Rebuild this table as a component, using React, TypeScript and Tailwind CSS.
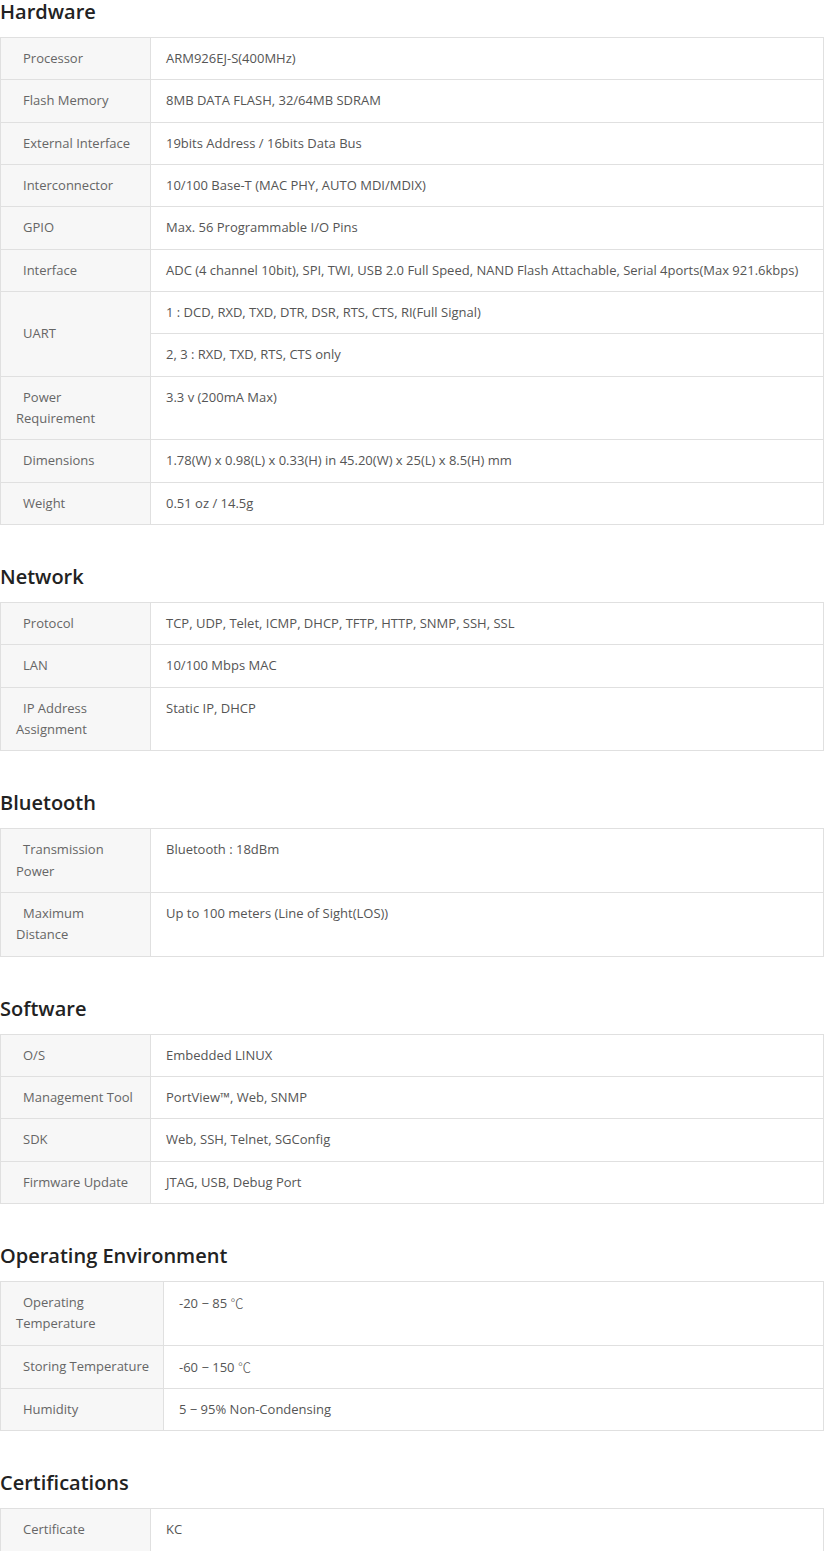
import React from "react";

type Row = { label: string; values: string[]; nowrap?: boolean };
type Section = { title: string; labelWidth: number; rows: Row[] };

const sections: Section[] = [
  {
    title: "Hardware",
    labelWidth: 150,
    rows: [
      { label: "Processor", values: ["ARM926EJ-S(400MHz)"] },
      { label: "Flash Memory", values: ["8MB DATA FLASH, 32/64MB SDRAM"] },
      { label: "External Interface", values: ["19bits Address / 16bits Data Bus"] },
      { label: "Interconnector", values: ["10/100 Base-T (MAC PHY, AUTO MDI/MDIX)"] },
      { label: "GPIO", values: ["Max. 56 Programmable I/O Pins"] },
      {
        label: "Interface",
        values: [
          "ADC (4 channel 10bit), SPI, TWI, USB 2.0 Full Speed, NAND Flash Attachable, Serial 4ports(Max 921.6kbps)",
        ],
      },
      {
        label: "UART",
        values: [
          "1 : DCD, RXD, TXD, DTR, DSR, RTS, CTS, RI(Full Signal)",
          "2, 3 : RXD, TXD, RTS, CTS only",
        ],
      },
      { label: "Power Requirement", values: ["3.3 v (200mA Max)"] },
      { label: "Dimensions", values: ["1.78(W) x 0.98(L) x 0.33(H) in 45.20(W) x 25(L) x 8.5(H) mm"] },
      { label: "Weight", values: ["0.51 oz / 14.5g"] },
    ],
  },
  {
    title: "Network",
    labelWidth: 150,
    rows: [
      { label: "Protocol", values: ["TCP, UDP, Telet, ICMP, DHCP, TFTP, HTTP, SNMP, SSH, SSL"] },
      { label: "LAN", values: ["10/100 Mbps MAC"] },
      { label: "IP Address Assignment", values: ["Static IP, DHCP"] },
    ],
  },
  {
    title: "Bluetooth",
    labelWidth: 150,
    rows: [
      { label: "Transmission Power", values: ["Bluetooth : 18dBm"] },
      { label: "Maximum Distance", values: ["Up to 100 meters (Line of Sight(LOS))"] },
    ],
  },
  {
    title: "Software",
    labelWidth: 150,
    rows: [
      { label: "O/S", values: ["Embedded LINUX"] },
      { label: "Management Tool", values: ["PortView™, Web, SNMP"] },
      { label: "SDK", values: ["Web, SSH, Telnet, SGConfig"] },
      { label: "Firmware Update", values: ["JTAG, USB, Debug Port"] },
    ],
  },
  {
    title: "Operating Environment",
    labelWidth: 163,
    rows: [
      { label: "Operating Temperature", values: ["-20 − 85 ℃"] },
      { label: "Storing Temperature", values: ["-60 − 150 ℃"], nowrap: true },
      { label: "Humidity", values: ["5 − 95% Non-Condensing"] },
    ],
  },
  {
    title: "Certifications",
    labelWidth: 150,
    rows: [{ label: "Certificate", values: ["KC"] }],
  },
];

function Value({ text }: { text: string }) {
  if (!text.includes("℃")) return <>{text}</>;
  const [before, after] = text.split("℃");
  return (
    <>
      {before}
      <span className="font-light" style={{ fontFamily: '"Noto Sans CJK KR", sans-serif' }}>
        ℃
      </span>
      {after}
    </>
  );
}

function SpecTable({ section }: { section: Section }) {
  return (
    <table className="w-full table-fixed border-collapse text-[13px] leading-[21.33px]">
      <colgroup>
        <col style={{ width: section.labelWidth }} />
        <col />
      </colgroup>
      <tbody>
        {section.rows.map((row) =>
          row.values.map((v, i) => (
            <tr key={row.label + i}>
              {i === 0 && (
                <th
                  rowSpan={row.values.length}
                  className={`border border-[#e0e0e0] bg-[#f7f7f7] py-[10px] pl-[15px] pr-[15px] text-left align-middle font-normal indent-[7px] text-[#666666] ${
                    row.nowrap ? "whitespace-nowrap" : ""
                  }`}
                >
                  {row.label}
                </th>
              )}
              <td className="border border-[#e0e0e0] bg-white py-[10px] pl-[15px] pr-[10px] align-top text-[#555555]">
                <Value text={v} />
              </td>
            </tr>
          ))
        )}
      </tbody>
    </table>
  );
}

export default function App() {
  return (
    <div
      className="w-[824px] bg-white"
      style={{ fontFamily: '"Open Sans", "Noto Sans", "Noto Sans CJK KR", sans-serif' }}
    >
      {sections.map((s, idx) => (
        <section key={s.title} className={idx === 0 ? "" : "mt-[40px]"}>
          <h2 className="mb-[13px] h-[24px] text-[20px] font-semibold leading-[24px] text-[#222222]">
            {s.title}
          </h2>
          <SpecTable section={s} />
        </section>
      ))}
    </div>
  );
}
